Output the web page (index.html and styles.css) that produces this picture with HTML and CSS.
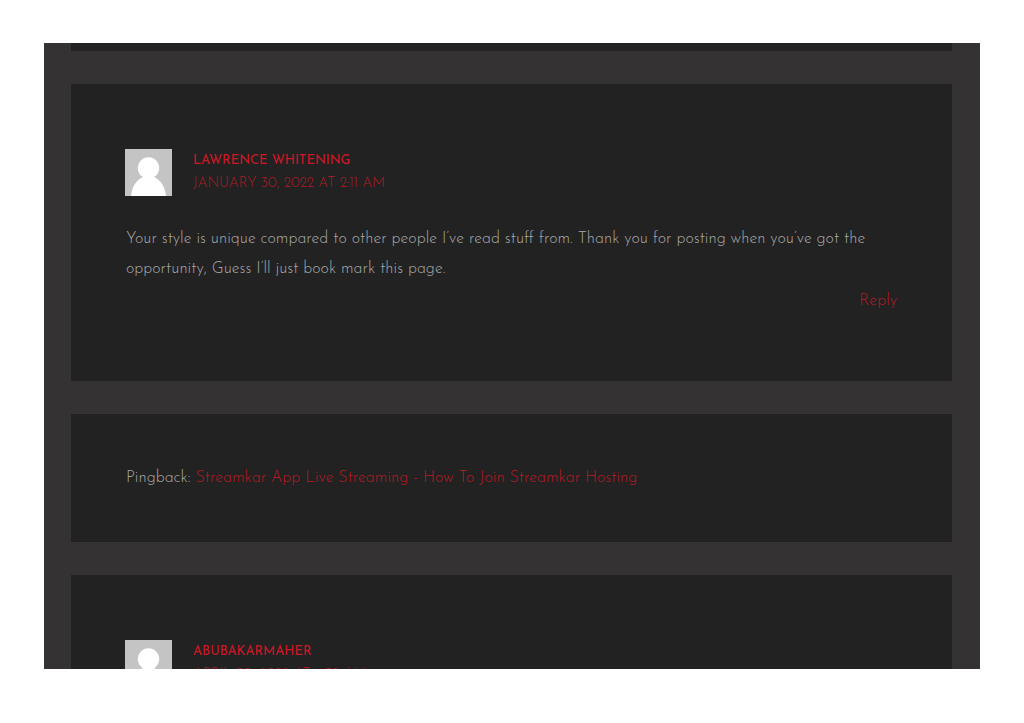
FILE: index.html
```
<!DOCTYPE html>
<html lang="en">
<head>
    <meta charset="UTF-8">
    <meta name="viewport" content="width=device-width, initial-scale=1.0">
    <title>Comments</title>
    <link rel="stylesheet" href="styles.css">
</head>
<body>
    <main class="comments">
        <div class="comment-end"></div>

        <article class="comment">
            <header class="comment-meta">
                <svg class="avatar" viewBox="0 0 47 47" aria-hidden="true">
                    <rect width="47" height="47" fill="#c4c4c4"/>
                    <circle cx="23.500" cy="19" r="10.700" fill="#fff"/>
                    <path d="M6 47C7 38 11 31 18 28H29C36 31 40 38 41 47Z" fill="#fff"/>
                </svg>
                <div class="comment-info">
                    <a class="author" href="#">Lawrence Whitening</a>
                    <a class="date" href="#"><time datetime="2022-01-30T02:11">January 30, 2022 at 2:11 am</time></a>
                </div>
            </header>
            <p class="comment-text">Your style is unique compared to other people I’ve read stuff from. Thank you for posting when you’ve got the opportunity, Guess I’ll just book mark this page.</p>
            <div class="reply"><a href="#">Reply</a></div>
        </article>

        <article class="comment pingback">
            <p>Pingback: <a href="#">Streamkar App Live Streaming - How To Join Streamkar Hosting</a></p>
        </article>

        <article class="comment">
            <header class="comment-meta">
                <svg class="avatar" viewBox="0 0 47 47" aria-hidden="true">
                    <rect width="47" height="47" fill="#c4c4c4"/>
                    <circle cx="23.500" cy="19" r="10.700" fill="#fff"/>
                    <path d="M6 47C7 38 11 31 18 28H29C36 31 40 38 41 47Z" fill="#fff"/>
                </svg>
                <div class="comment-info">
                    <a class="author" href="#">abubakarmaher</a>
                    <a class="date" href="#"><time datetime="2022-04-30T06:32">April 30, 2022 at 6:32 am</time></a>
                </div>
            </header>
        </article>
    </main>
</body>
</html>
```
FILE: styles.css
```
* {
    box-sizing: border-box;
}
body {
    margin: 0;
    padding: 43px 44px 54px;
    height: 100vh;
    background-color: #fff;
    color: #a8a8a8;
    font-family: "Josefin Sans", Lato, sans-serif;
    font-size: 16px;
    font-weight: 300;
    line-height: 30px;
}
a {
    color: #b31b25;
    text-decoration: none;
}
p {
    margin: 0;
}
.comments {
    height: 100%;
    padding: 0 28px 0 27px;
    overflow: hidden;
    background-color: #353233;
}
.comment,
.comment-end {
    margin-bottom: 33px;
    background-color: #222;
}
.comment {
    padding: 65px 55px;
}
.comment-end {
    height: 8px;
}
.comment-meta {
    display: flex;
    gap: 21px;
    margin-left: -1px;
    margin-bottom: 28px;
}
.avatar {
    width: 47px;
    height: 47px;
}
.comment-info {
    display: flex;
    flex-direction: column;
    font-size: 14px;
    line-height: 23px;
    text-transform: uppercase;
}
.author {
    color: #cf1826;
    font-size: 13px;
    font-weight: 400;
}
.reply {
    margin-top: 2px;
    text-align: right;
}
.pingback {
    padding: 49px 55px;
}
```
